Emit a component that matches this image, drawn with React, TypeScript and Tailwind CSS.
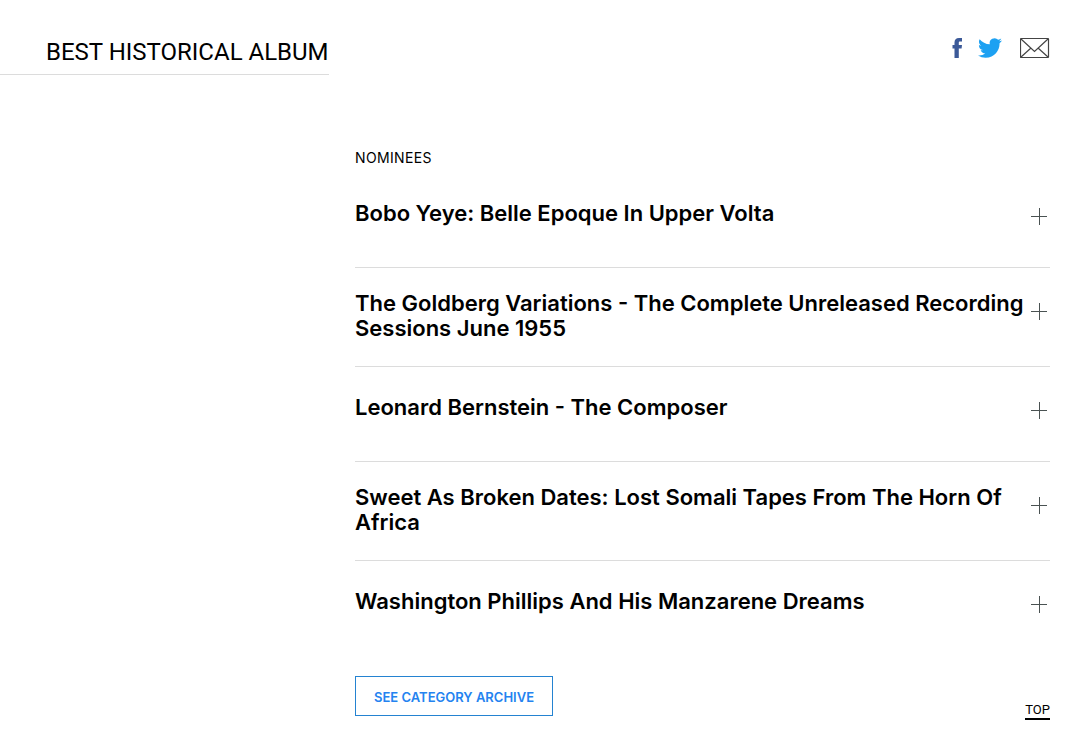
import React, { useState } from 'react';

interface Nominee {
  id: number;
  title: string;
}

const nominees: Nominee[] = [
  { id: 1, title: 'Bobo Yeye: Belle Epoque In Upper Volta' },
  { id: 2, title: 'The Goldberg Variations - The Complete Unreleased Recording Sessions June 1955' },
  { id: 3, title: 'Leonard Bernstein - The Composer' },
  { id: 4, title: 'Sweet As Broken Dates: Lost Somali Tapes From The Horn Of Africa' },
  { id: 5, title: 'Washington Phillips And His Manzarene Dreams' },
];

const ShareLinks: React.FC = () => (
  <nav aria-label="Share" className="flex items-center pt-9">
    <a href="#facebook" aria-label="Share on Facebook" className="mr-4">
      <svg className="h-[22px] w-[10px]" viewBox="0 0 10 22" fill="#3b5998">
        <path d="M2.500 21V11.600H.5V8h2V5.500C2.500 2.600 4 1 7 1h3v3.600H8C7.100 4.600 6.800 5 6.800 6v2H10l-.4 3.600H6.800V21z" />
      </svg>
    </a>
    <a href="#twitter" aria-label="Share on Twitter" className="mr-[18px]">
      <svg className="h-[24px] w-[24px]" viewBox="0 0 24 24" fill="#1da1f2">
        <path d="M23.953 4.57a10 10 0 01-2.825.775 4.958 4.958 0 002.163-2.723c-.951.555-2.005.959-3.127 1.184a4.92 4.92 0 00-8.384 4.482C7.690 8.095 4.067 6.130 1.640 3.162a4.822 4.822 0 00-.666 2.475c0 1.710.870 3.213 2.188 4.096a4.904 4.904 0 01-2.228-.616v.060a4.923 4.923 0 003.946 4.827 4.996 4.996 0 01-2.212.085 4.936 4.936 0 004.604 3.417 9.867 9.867 0 01-6.102 2.105c-.390 0-.779-.023-1.170-.067a13.995 13.995 0 007.557 2.209c9.053 0 13.998-7.496 13.998-13.985 0-.210 0-.420-.015-.630A9.935 9.935 0 0024 4.590z" />
      </svg>
    </a>
    <a href="#email" aria-label="Share by email">
      <svg className="h-[22px] w-[30px]" viewBox="0 0 30 22" fill="none" stroke="#444444" strokeWidth="1.2">
        <rect x="0.500" y="1.500" width="28" height="19" rx="0.500" />
        <path d="M1 2l13.500 12.500L28 2M1 20l10-9M28 20l-10-9" />
      </svg>
    </a>
  </nav>
);

const NomineeRow: React.FC<{ nominee: Nominee }> = ({ nominee }) => {
  const [isOpen, setIsOpen] = useState(false);

  return (
    <li className="min-h-[95px] border-b border-[#dcdcdc] pt-[23px] pb-[25px] last:border-b-0">
      <button
        type="button"
        aria-expanded={isOpen}
        onClick={() => setIsOpen(prev => !prev)}
        className="flex min-h-[34px] w-full cursor-pointer items-center justify-between text-left"
      >
        <span className="font-['Inter',sans-serif] text-[22px] leading-[25px] font-semibold">
          {nominee.title}
        </span>
        <svg
          className="mt-3 mr-[2px] h-[18px] w-[18px] shrink-0 self-start"
          viewBox="0 0 18 18"
          stroke="#4a5252"
          strokeWidth="1"
        >
          <path d="M1 8.500h16" />
          {!isOpen && <path d="M9.500 0v17" />}
        </svg>
      </button>
    </li>
  );
};

export default function App() {
  return (
    <main className="bg-white pb-5 font-['Roboto',sans-serif] text-black">
      <header className="flex items-start justify-between pr-8">
        <h1 className="border-b border-[#dcdcdc] pt-9 pb-[6px] pl-[46px] text-2xl leading-8">
          BEST HISTORICAL ALBUM
        </h1>
        <ShareLinks />
      </header>

      {/* Nominees */}
      <section className="mt-[72px] mr-8 ml-[355px]">
        <h2 className="mb-[5px] font-['Inter',sans-serif] text-sm leading-[21px] tracking-wide">
          NOMINEES
        </h2>
        <ul>
          {nominees.map(nominee => (
            <NomineeRow key={nominee.id} nominee={nominee} />
          ))}
        </ul>

        <div className="mt-5 flex items-end justify-between">
          <a
            href="#archive"
            className="flex h-10 items-center border border-[#2483d1] px-[18px] pt-1 font-['Inter',sans-serif] text-[13px] font-semibold text-[#2483f0]"
          >
            SEE CATEGORY ARCHIVE
          </a>
          <a href="#top" className="-mb-1 border-b-2 border-black text-[13px] leading-4">
            TOP
          </a>
        </div>
      </section>
    </main>
  );
}
